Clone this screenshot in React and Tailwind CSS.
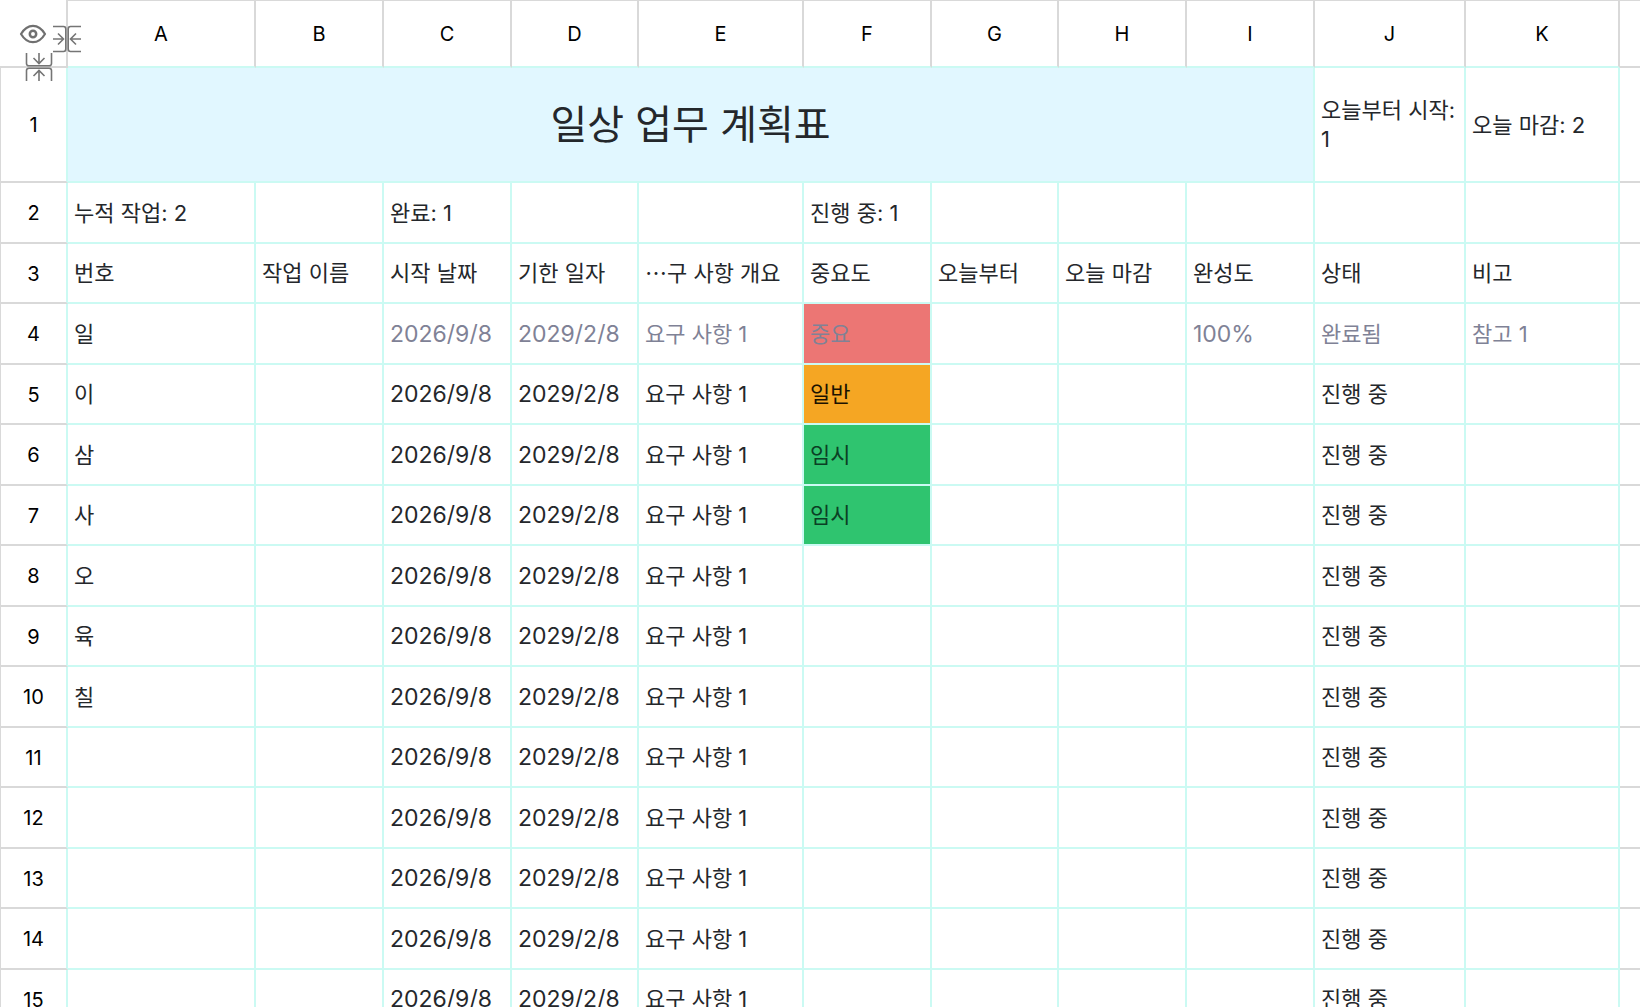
import React from "react";
import clsx from "clsx";

const columns = [
  { name: "A", width: "w-[188px]" },
  { name: "B", width: "w-[128px]" },
  { name: "C", width: "w-[128px]" },
  { name: "D", width: "w-[127px]" },
  { name: "E", width: "w-[165px]" },
  { name: "F", width: "w-[128px]" },
  { name: "G", width: "w-[127px]" },
  { name: "H", width: "w-[128px]" },
  { name: "I", width: "w-[128px]" },
  { name: "J", width: "w-[151px]" },
  { name: "K", width: "w-[154px]" },
];

const numbers = ["이", "삼", "사", "오", "육", "칠", "", "", "", "", ""];

const levels = [
  { text: "일반", style: "bg-[#f5a623] text-[#1b1200]" },
  { text: "임시", style: "bg-[#2fc46f] text-[#0b3f25]" },
  { text: "임시", style: "bg-[#2fc46f] text-[#0b3f25]" },
];

const rows = [
  { cells: { A: "누적 작업: 2", C: "완료: 1", F: "진행 중: 1" } },
  {
    cells: {
      A: "번호",
      B: "작업 이름",
      C: "시작 날짜",
      D: "기한 일자",
      // the centred dots come from the Korean font
      E: (
        <>
          <span className="font-['Noto_Sans_CJK_KR',sans-serif] leading-none">…</span>구 사항 개요
        </>
      ),
      F: "중요도",
      G: "오늘부터",
      H: "오늘 마감",
      I: "완성도",
      J: "상태",
      K: "비고",
    },
  },
  {
    done: true,
    level: "bg-[#ec7674]",
    cells: {
      A: "일",
      C: "2026/9/8",
      D: "2029/2/8",
      E: "요구 사항 1",
      F: "중요",
      I: "100%",
      J: "완료됨",
      K: "참고 1",
    },
  },
  ...numbers.map((number, i) => ({
    level: levels[i]?.style,
    cells: {
      A: number,
      C: "2026/9/8",
      D: "2029/2/8",
      E: "요구 사항 1",
      F: levels[i]?.text,
      J: "진행 중",
    },
  })),
];

const cellClass = "border-r-2 border-b-2 border-[#cbfaf3] px-[6px] pt-px text-left align-middle font-normal";
const rowHeadClass =
  "border-l border-l-[#d9d9d9] border-r-2 border-r-[#cbfaf3] border-b-2 border-b-[#d9d9d9] pt-px text-center text-xl font-normal text-black";

const isNumeric = (value) => typeof value === "string" && /^[\d/%]+$/.test(value);

function EyeIcon() {
  return (
    <svg width="28" height="20" viewBox="0 0 28 20" fill="none" stroke="#707070" strokeWidth="2.2">
      <path d="M2 10C5.2 4.6 9.2 1.8 14 1.8S22.8 4.6 26 10C22.8 15.4 18.8 18.2 14 18.2S5.2 15.4 2 10Z" strokeLinejoin="round" />
      <circle cx="14" cy="10" r="3.2" strokeWidth="2.5" />
    </svg>
  );
}

// Two half boxes with arrows that point at the line between them
function CollapseIcon({ className }) {
  return (
    <svg className={className} width="28" height="28" viewBox="0 0 28 28" fill="none" stroke="#757575" strokeWidth="1.6">
      <path d="M0 1.5H10.5Q12.8 1.5 12.8 4V24Q12.8 26.5 10.5 26.5H0" />
      <path d="M28 1.5H17.5Q15.2 1.5 15.2 4V24Q15.2 26.5 17.5 26.5H28" />
      <path d="M0 14H10.5M5 8.5L10.5 14L5 19.5" />
      <path d="M28 14H17.5M23 8.5L17.5 14L23 19.5" />
    </svg>
  );
}

function Corner() {
  return (
    <td className="relative border-r-2 border-b-2 border-[#d9d9d9] p-0">
      <button type="button" aria-label="보기" className="absolute top-6 left-[19px]">
        <EyeIcon />
      </button>
      <button type="button" aria-label="열 숨기기" className="absolute top-[25px] left-[53px] z-10">
        <CollapseIcon />
      </button>
      <button type="button" aria-label="행 숨기기" className="absolute top-[53px] left-[25px] z-10">
        <CollapseIcon className="rotate-90" />
      </button>
    </td>
  );
}

export default function App() {
  return (
    <div className="h-screen overflow-hidden bg-white font-['Inter','Noto_Sans_CJK_KR',sans-serif] text-[22px] leading-[29px] text-[#24272b]">
      <table className="w-full table-fixed border-separate border-spacing-0">
        <colgroup>
          <col className="w-[68px]" />
          {columns.map((c) => (
            <col key={c.name} className={c.width} />
          ))}
          <col />
        </colgroup>
        <thead>
          <tr className="h-[68px]">
            <Corner />
            {columns.map((c) => (
              <th
                key={c.name}
                scope="col"
                className="border-t border-r-2 border-b-2 border-t-[#d9d9d9] border-r-[#d9d9d9] border-b-[#cbfaf3] pt-px text-center text-xl font-normal text-black"
              >
                {c.name}
              </th>
            ))}
            <td className="border-t border-b-2 border-[#d9d9d9]" />
          </tr>
        </thead>
        <tbody>
          <tr className="h-[115px]">
            <th scope="row" className={rowHeadClass}>1</th>
            <td
              colSpan={9}
              className="border-r-2 border-b-2 border-[#cbfaf3] bg-[#e1f7ff] bg-clip-padding text-center align-middle text-[40px] leading-[56px]"
            >
              일상 업무 계획표
            </td>
            <td className={cellClass}>오늘부터 시작: 1</td>
            <td className={cellClass}>오늘 마감: 2</td>
            <td className="border-b-2 border-[#d9d9d9]" />
          </tr>
          {rows.map((row, i) => (
            <tr key={i} className={i % 2 === 0 ? "h-[61px]" : "h-[60px]"}>
              <th scope="row" className={rowHeadClass}>{i + 2}</th>
              {columns.map((c) => (
                <td
                  key={c.name}
                  className={clsx(
                    cellClass,
                    "overflow-hidden bg-clip-padding whitespace-nowrap",
                    isNumeric(row.cells[c.name]) && "text-[23px]",
                    row.done && c.name !== "A" && "text-[#7f8296]",
                    c.name === "F" && row.level
                  )}
                >
                  {row.cells[c.name]}
                </td>
              ))}
              <td className="border-b-2 border-[#d9d9d9]" />
            </tr>
          ))}
        </tbody>
      </table>
    </div>
  );
}
